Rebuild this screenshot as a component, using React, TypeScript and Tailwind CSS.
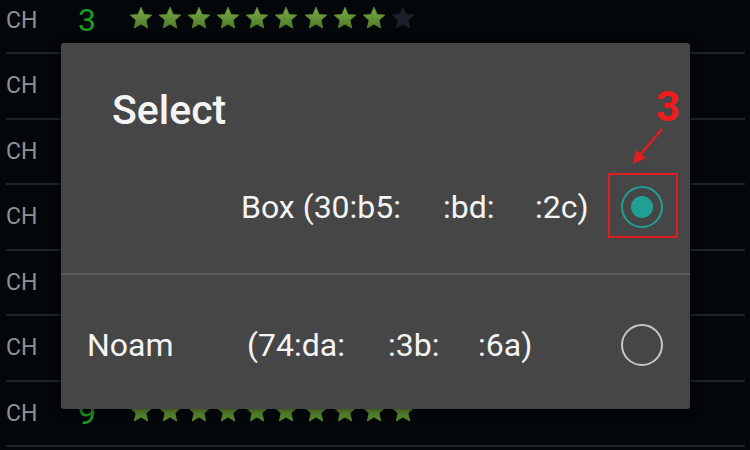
import React from "react";

const Star = ({ on }: { on: boolean }) => (
  <svg width="24" height="24" viewBox="0 0 24 24" className="shrink-0">
    <defs>
      <linearGradient id="sg" x1="0" y1="0" x2="0" y2="1">
        <stop offset="0" stopColor="#7fae48" />
        <stop offset="1" stopColor="#4b7a26" />
      </linearGradient>
    </defs>
    <polygon
      points="12,1.2 15.1,8.4 22.8,9.1 17,14.2 18.7,22 12,18 5.3,22 7,14.2 1.2,9.1 8.9,8.4"
      fill={on ? "url(#sg)" : "#1a2129"}
      stroke={on ? "#5c8a34" : "#1a2129"}
      strokeWidth="0.8"
      strokeLinejoin="round"
    />
  </svg>
);

const rows = [
  { n: "3", stars: 9 },
  { n: "", stars: 9 },
  { n: "", stars: 9 },
  { n: "", stars: 9 },
  { n: "", stars: 9 },
  { n: "", stars: 9 },
  { n: "9", stars: 10 },
];

export default function App() {
  return (
    <div
      className="relative w-[750px] h-[450px] overflow-hidden bg-[#03070a]"
      style={{ fontFamily: "Roboto, 'Noto Sans', sans-serif" }}
    >
      {/* background list */}
      <div className="mt-[-11.5px] ml-[6px] mr-[5px]">
        {rows.map((r, i) => (
          <div
            key={i}
            className="flex items-center h-[65.5px] border-b-2 border-[#1c2228]"
          >
            <span className="w-[72px] text-[23px] text-[#8e9193] leading-none">CH</span>
            <span className="w-[50.5px] text-[32px] text-[#1f9c22] leading-none">{r.n}</span>
            {r.n !== "" && (
              <div className="flex gap-[5.2px] mt-[-4px]">
                {Array.from({ length: 10 }).map((_, k) => (
                  <Star key={k} on={k < r.stars} />
                ))}
              </div>
            )}
          </div>
        ))}
      </div>

      {/* dialog */}
      <div className="absolute left-[61px] top-[43px] w-[629px] h-[366px] rounded-[3px] bg-[#464646] flex flex-col text-[#f4f4f4] shadow-[0_2px_8px_rgba(0,0,0,0.6)]">
        <div className="h-[114px] pt-[43px] pl-[51px]">
          <div className="text-[41px] leading-[48px] font-medium">Select</div>
        </div>
        <div className="h-[100px] flex items-center pl-[180px] pr-[27px]">
          <div className="flex-1 flex text-[32px] leading-[38px] whitespace-pre">
            <span className="w-[202px]">Box (30:b5:</span>
            <span className="w-[92px]">:bd:</span>
            <span>:2c)</span>
          </div>
          <div className="w-[42px] h-[42px] rounded-full border-[2.5px] border-[#20a094] flex items-center justify-center">
            <div className="w-[22px] h-[22px] rounded-full bg-[#20a094]" />
          </div>
        </div>
        <div className="h-[16px]" />
        <div className="h-[2px] bg-[#5d5d5d]" />
        <div className="flex-1 flex items-center pl-[26px] pr-[27px] pt-[6px]">
          <div className="flex-1 flex text-[32px] leading-[38px] whitespace-pre">
            <span className="w-[160px]">Noam</span>
            <span className="w-[141px]">(74:da:</span>
            <span className="w-[90px]">:3b:</span>
            <span>:6a)</span>
          </div>
          <div className="w-[42px] h-[42px] rounded-full border-[2.5px] border-[#c6c6c6]" />
        </div>
      </div>

      {/* annotation */}
      <div className="absolute left-[608px] top-[173px] w-[70px] h-[65px] border-2 border-[#dd1f1f]" />
      <div className="absolute left-[656px] top-[84px] text-[42px] leading-[46px] font-bold text-[#ee1c1c]">
        3
      </div>
      <svg className="absolute left-0 top-0" width="750" height="450" viewBox="0 0 750 450">
        <line x1="662" y1="129" x2="640" y2="155" stroke="#e21d1d" strokeWidth="2.5" />
        <polygon points="633,164 636,150 646,158" fill="#e21d1d" />
      </svg>
    </div>
  );
}
